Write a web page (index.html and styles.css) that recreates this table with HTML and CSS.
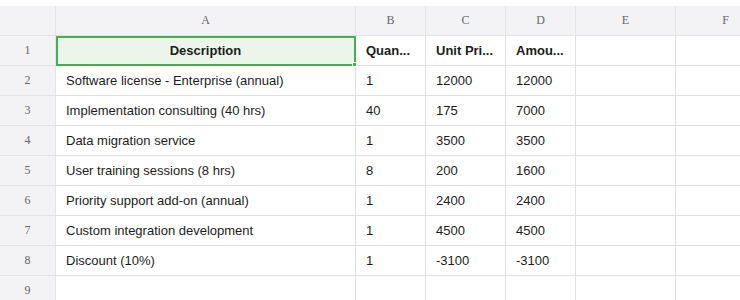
FILE: index.html
```html
<!DOCTYPE html>
<html>
<head>
<meta charset="utf-8">
<link rel="stylesheet" href="styles.css">
</head>
<body>
<div class="sheet">
  <div class="hd corner"></div>
  <div class="hd col">A</div>
  <div class="hd col">B</div>
  <div class="hd col">C</div>
  <div class="hd col">D</div>
  <div class="hd col">E</div>
  <div class="hd col">F</div>

  <div class="hd row">1</div>
  <div class="c b center sel">Description</div>
  <div class="c b">Quan...</div>
  <div class="c b">Unit Pri...</div>
  <div class="c b">Amou...</div>
  <div class="c"></div>
  <div class="c"></div>

  <div class="hd row">2</div>
  <div class="c">Software license - Enterprise (annual)</div>
  <div class="c">1</div>
  <div class="c">12000</div>
  <div class="c">12000</div>
  <div class="c"></div>
  <div class="c"></div>

  <div class="hd row">3</div>
  <div class="c">Implementation consulting (40 hrs)</div>
  <div class="c">40</div>
  <div class="c">175</div>
  <div class="c">7000</div>
  <div class="c"></div>
  <div class="c"></div>

  <div class="hd row">4</div>
  <div class="c">Data migration service</div>
  <div class="c">1</div>
  <div class="c">3500</div>
  <div class="c">3500</div>
  <div class="c"></div>
  <div class="c"></div>

  <div class="hd row">5</div>
  <div class="c">User training sessions (8 hrs)</div>
  <div class="c">8</div>
  <div class="c">200</div>
  <div class="c">1600</div>
  <div class="c"></div>
  <div class="c"></div>

  <div class="hd row">6</div>
  <div class="c">Priority support add-on (annual)</div>
  <div class="c">1</div>
  <div class="c">2400</div>
  <div class="c">2400</div>
  <div class="c"></div>
  <div class="c"></div>

  <div class="hd row">7</div>
  <div class="c">Custom integration development</div>
  <div class="c">1</div>
  <div class="c">4500</div>
  <div class="c">4500</div>
  <div class="c"></div>
  <div class="c"></div>

  <div class="hd row">8</div>
  <div class="c">Discount (10%)</div>
  <div class="c">1</div>
  <div class="c">-3100</div>
  <div class="c">-3100</div>
  <div class="c"></div>
  <div class="c"></div>

  <div class="hd row">9</div>
  <div class="c"></div>
  <div class="c"></div>
  <div class="c"></div>
  <div class="c"></div>
  <div class="c"></div>
  <div class="c"></div>
</div>
</body>
</html>
```

FILE: styles.css
```css
html, body {
  margin: 0;
  padding: 0;
  background: #ffffff;
  overflow: hidden;
}
body {
  padding-top: 6px;
}
.sheet {
  display: grid;
  grid-template-columns: 56px 300px 70px 80px 70px 100px 100px;
  grid-auto-rows: 30px;
  width: 776px;
}
.hd {
  background: #f3f3f6;
  color: #666666;
  font-family: "Liberation Serif", serif;
  font-size: 12px;
  display: flex;
  align-items: center;
  justify-content: center;
  border-right: 1px solid #e3e3e6;
  border-bottom: 1px solid #e3e3e6;
  box-sizing: border-box;
}
.c {
  font-family: "Liberation Sans", Arial, sans-serif;
  font-size: 13px;
  color: #1c1c1c;
  display: flex;
  align-items: center;
  padding-left: 10px;
  white-space: nowrap;
  overflow: hidden;
  border-right: 1px solid #e0e0e0;
  border-bottom: 1px solid #e0e0e0;
  box-sizing: border-box;
}
.b {
  font-weight: bold;
}
.center {
  justify-content: center;
  padding-left: 0;
}
.sel {
  background: #ebf5e9;
  position: relative;
  overflow: visible;
}
.sel::after {
  content: "";
  position: absolute;
  left: 0;
  top: 0;
  right: -1px;
  bottom: -1px;
  border: 2px solid #3fb34f;
  box-sizing: border-box;
}
.sel::before {
  content: "";
  position: absolute;
  right: -2px;
  bottom: -2px;
  width: 3px;
  height: 3px;
  background: #3fb34f;
  border: 1px solid #ffffff;
  box-sizing: content-box;
  z-index: 1;
}
```
